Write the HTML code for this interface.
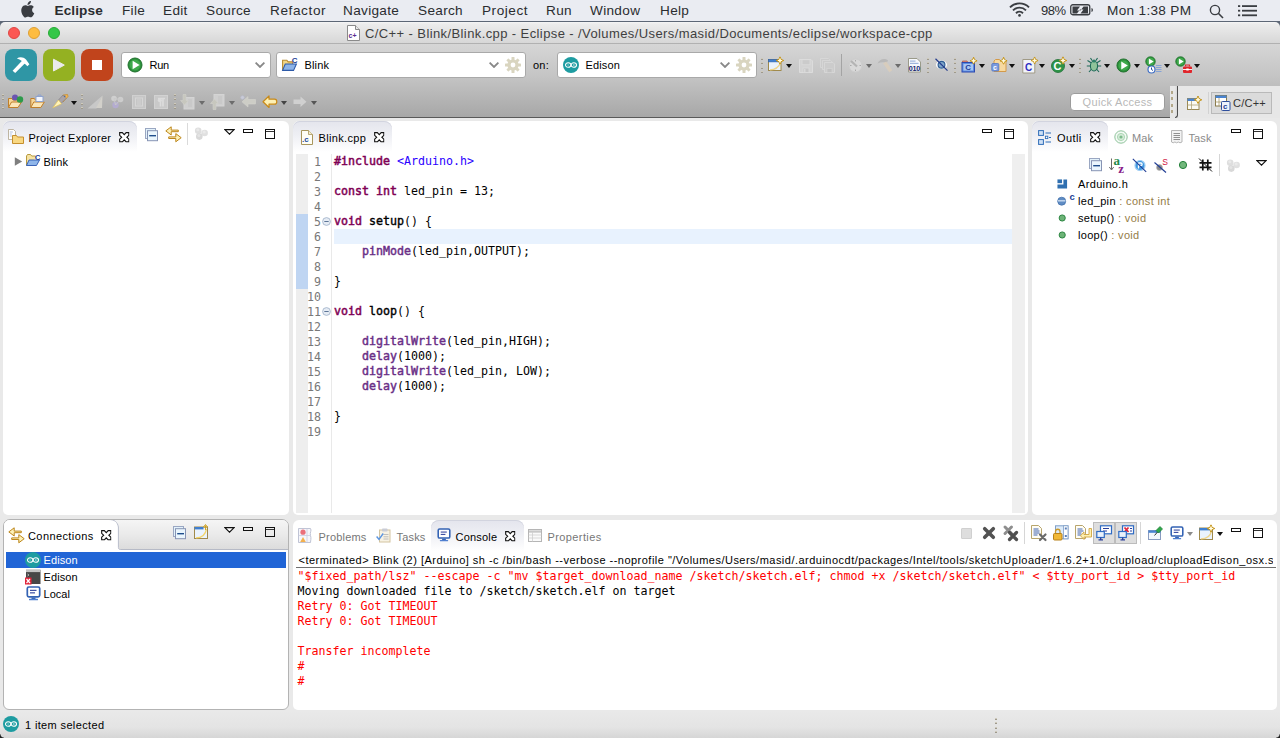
<!DOCTYPE html>
<html lang="en">
<head>
<meta charset="utf-8">
<title>C/C++ - Blink/Blink.cpp - Eclipse</title>
<style>
*{box-sizing:border-box;margin:0;padding:0}
html,body{width:1280px;height:738px;overflow:hidden;background:#e9e9e9;font-family:"Liberation Sans",sans-serif;font-size:12px;color:#000}
.abs{position:absolute}
svg{position:absolute;overflow:visible}
#menubar{position:absolute;left:0;top:0;width:1280px;height:22px;background:#eaecf2;border-bottom:1px solid #5d6776;font-size:14px;color:#2a2c30}
#menubar span{position:absolute;top:2px;line-height:17px;white-space:nowrap;letter-spacing:.32px;font-size:13.6px}
#titlebar{position:absolute;left:0;top:22px;width:1280px;height:22px;background:linear-gradient(#f6f6f6 0,#ececec 2px,#d7d7d7);border-bottom:1px solid #b1b1b1;border-radius:5px 5px 0 0}
#titlebar .t{position:absolute;left:365px;top:3.6px;font-size:13px;line-height:16px;color:#3f3f3f;white-space:nowrap;letter-spacing:.4px}
.tl{position:absolute;top:5px;width:12px;height:12px;border-radius:50%}
#toolbar{position:absolute;left:0;top:44px;width:1280px;height:74px;background:linear-gradient(#d6d6d6,#c4c4c4 45%,#a7a7a7);border-bottom:1px solid #595959}
#persp{position:absolute;left:1170px;top:86px;width:110px;height:32px;background:#e7e7e7}
.big{position:absolute;top:49px;width:32px;height:32px;border-radius:8px}
.combo{position:absolute;top:52px;height:26px;background:#fff;border:1px solid #a9a9a9;border-radius:3px;font-size:11px;letter-spacing:.15px;line-height:24px}
.combo .lbl{position:absolute;top:0;white-space:nowrap}
.tri{position:absolute;width:0;height:0;border-left:3px solid transparent;border-right:3px solid transparent;border-top:4.5px solid #111;margin-left:-.5px}
.tri.g{border-top-color:#6c6c6c}
.dots{position:absolute;width:2px;height:15px;background:repeating-linear-gradient(#cfcabb 0 1px,#9e998d 1px 2px,transparent 2px 4.3px)}
.panel{position:absolute;background:#fff;border-radius:6px 6px 5px 5px}
.tabtxt{position:absolute;font-size:11px;white-space:nowrap;line-height:16px;letter-spacing:.3px}
.ui{font-size:11px;white-space:nowrap;line-height:16px;letter-spacing:.25px;position:absolute}
.mono{font-family:"DejaVu Sans Mono","Liberation Mono",monospace;font-size:11.63px;white-space:pre;position:absolute;line-height:15px}
.kw{color:#7f0055;-webkit-text-stroke:.5px #7f0055}
.mono b{font-weight:normal;-webkit-text-stroke:.38px #000}
.fn{color:#6a2e86;-webkit-text-stroke:.45px #6a2e86}
.str{color:#2a00ff}
.red{color:#ff0000}
.minb{position:absolute;width:10px;height:4px;border:1px solid #111}
.maxb{position:absolute;width:10px;height:10px;border:1px solid #111;background:linear-gradient(#333,#333) 0 1px/8px 1px no-repeat}
.vsep{position:absolute;width:1px;background:#c8c8c8}
.deco{color:#957d47}
#status{position:absolute;left:0;top:711px;width:1280px;height:27px;background:linear-gradient(#e9e9e9,#e4e4e4 60%,#d6d6d6)}
</style>
</head>
<body>
<!-- MENUBAR -->
<div id="menubar">
<svg style="left:20px;top:.5px" width="15.500" height="17.500" viewBox="0 0 15 17"><path fill="#3a3d42" d="M10.6.1c.1 1-.3 1.900-.9 2.600-.6.700-1.500 1.200-2.400 1.100-.1-.9.400-1.900.9-2.500C8.800.6 9.800.1 10.600.1zM13.400 5.800c-.1.100-1.700 1-1.700 2.900 0 2.300 2 3.100 2.100 3.100 0 .1-.3 1.100-1.100 2.200-.6.900-1.300 1.900-2.400 1.900-1 0-1.300-.6-2.500-.6s-1.600.6-2.500.7c-1 0-1.800-1-2.500-2C1.500 12.100.5 8.600 1.900 6.200c.7-1.200 1.900-1.900 3.200-2 1-.0 1.900.7 2.500.7s1.700-.8 2.900-.7c.5 0 1.900.2 2.900 1.600z"/></svg>
<span style="left:54.500px;font-weight:bold;letter-spacing:.1px">Eclipse</span>
<span style="left:122px">File</span>
<span style="left:163px">Edit</span>
<span style="left:206px">Source</span>
<span style="left:270px;letter-spacing:.6px">Refactor</span>
<span style="left:343px">Navigate</span>
<span style="left:418px">Search</span>
<span style="left:482px;letter-spacing:.55px">Project</span>
<span style="left:546px">Run</span>
<span style="left:590px">Window</span>
<span style="left:660px">Help</span>
<!-- wifi -->
<svg style="left:1009px;top:2px" width="21" height="15" viewBox="0 0 21 15"><g fill="none" stroke="#3a3d42" stroke-width="1.900" stroke-linecap="butt"><path d="M1 5.300a13.500 13.500 0 0 1 19 0"/><path d="M4 8.300a9.200 9.200 0 0 1 13 0"/><path d="M7 11.200a5 5 0 0 1 7 0"/></g><circle cx="10.500" cy="13.400" r="1.300" fill="#3a3d42"/></svg>
<span style="left:1041px;font-size:13px;letter-spacing:-.5px">98%</span>
<!-- battery -->
<svg style="left:1070px;top:4px" width="24" height="12" viewBox="0 0 24 12"><rect x=".75" y=".75" width="19" height="10" rx="2" fill="none" stroke="#3a3d42" stroke-width="1.300"/><path d="M21.500 4v4c.9-.2 1.400-1 1.400-2s-.5-1.800-1.400-2z" fill="#3a3d42"/><path fill="#3a3d42" d="M2.500 2.500h7.500l-3 4h3.500l.4-.4v0L13.500 2.500h4.500v7h-7.500l3-4h-3.500L7 9.500h-4.500z"/></svg>
<span style="left:1107px">Mon 1:38 PM</span>
<!-- search -->
<svg style="left:1209px;top:4px" width="15" height="15" viewBox="0 0 15 15"><circle cx="6" cy="6" r="4.600" fill="none" stroke="#3a3d42" stroke-width="1.400"/><path d="M9.300 9.300L14 14" stroke="#3a3d42" stroke-width="1.600"/></svg>
<!-- list -->
<svg style="left:1238px;top:5px" width="19" height="12" viewBox="0 0 19 12"><g fill="#3a3d42"><rect x="0" y=".2" width="2.200" height="1.800"/><rect x="4" y=".2" width="15" height="1.800"/><rect x="0" y="4.800" width="2.200" height="1.800"/><rect x="4" y="4.800" width="15" height="1.800"/><rect x="0" y="9.400" width="2.200" height="1.800"/><rect x="4" y="9.400" width="15" height="1.800"/></g></svg>
</div>
<!-- TITLEBAR -->
<div class="abs" style="left:0;top:22px;width:1280px;height:6px;background:#5d6776"></div>
<div id="titlebar">
<div class="tl" style="left:8px;background:#fc5753;border:.5px solid #df4744"></div>
<div class="tl" style="left:28px;background:#fdbc40;border:.5px solid #de9f34"></div>
<div class="tl" style="left:48px;background:#33c748;border:.5px solid #27aa35"></div>
<!-- cpp file icon -->
<svg style="left:347px;top:3px" width="13" height="16" viewBox="0 0 13 16"><path d="M.5.500h8l4 4v11h-12z" fill="#fff" stroke="#8a8a8a"/><path d="M8.500.500v4h4" fill="#e8e8e8" stroke="#8a8a8a"/><text x="1.500" y="13" font-size="7" font-weight="bold" fill="#5a2d91" font-family="Liberation Sans, sans-serif">c+</text></svg>
<div class="t">C/C++ - Blink/Blink.cpp - Eclipse - /Volumes/Users/masid/Documents/eclipse/workspace-cpp</div>
</div>
<!-- SYMBOL DEFS -->
<svg width="0" height="0" style="left:-10px;top:-10px"><defs>
<symbol id="arduino" viewBox="0 0 16 16"><circle cx="8" cy="8" r="8" fill="#1e9ca1"/><g fill="none" stroke="#fff" stroke-width="1.050"><ellipse cx="5.200" cy="8" rx="2.700" ry="2.300"/><ellipse cx="10.800" cy="8" rx="2.700" ry="2.300"/></g><path d="M4.300 8h1.800M9.900 8h1.800M10.800 7.100v1.800" stroke="#bfe4e6" stroke-width=".6"/></symbol>
<symbol id="runico" viewBox="0 0 16 16"><circle cx="8" cy="8" r="7" fill="#2b8f3b" stroke="#1f6f2c" stroke-width="1"/><circle cx="8" cy="8" r="5.400" fill="#3fa94b"/><path d="M5.600 3.800v8.400l7-4.200z" fill="#fff"/></symbol>
<symbol id="cfolder" viewBox="0 0 16 16"><path d="M1.500 13.500v-9.500h4l1.200 1.500h4.300v2" fill="#f3d787" stroke="#b98a2c"/><path d="M1.500 13.500l2.500-6h10.500l-2.700 6z" fill="#8db4e8" stroke="#2d5aa8"/><text x="10.200" y="6.200" font-size="7.500" font-weight="bold" fill="#1c3f94" font-family="Liberation Sans, sans-serif">C</text></symbol>
<symbol id="gear" viewBox="0 0 16 16"><g fill="#d9d5c0"><circle cx="8" cy="8" r="5.600"/><g id="gt"><rect x="6.500" y="0" width="3" height="16" rx=".6"/><rect x="0" y="6.500" width="16" height="3" rx=".6"/></g><g transform="rotate(45 8 8)"><rect x="6.500" y="0" width="3" height="16" rx=".6"/><rect x="0" y="6.500" width="16" height="3" rx=".6"/></g></g><circle cx="8" cy="8" r="2.400" fill="#fff"/></symbol>
<symbol id="chev" viewBox="0 0 10 6"><path d="M.6.600L5 5l4.400-4.400" fill="none" stroke="#888" stroke-width="1.800"/></symbol>
<symbol id="xclose" viewBox="0 0 11 11"><path d="M.7.700h2.800L5.500 2.800 7.500.700h2.800v2.800L8.200 5.500l2.100 2v2.800H7.500L5.500 8.200l-2 2.100H.7V7.500L2.800 5.500.700 3.500z" fill="#fff" stroke="#111" stroke-width="1.150" stroke-linejoin="miter"/></symbol>
<symbol id="collapse" viewBox="0 0 14 14"><rect x=".5" y=".5" width="10" height="10" fill="#e3f2fb" stroke="#9aa7c2"/><rect x="2.500" y="2.700" width="10" height="10" fill="#eaf6fd" stroke="#8794b4"/><rect x="4.200" y="7" width="6.800" height="1.400" fill="#1f4e8c"/></symbol>
<symbol id="graydots" viewBox="0 0 14 13"><circle cx="4.200" cy="3.800" r="3.300" fill="#dedede"/><circle cx="10.600" cy="6" r="3.300" fill="#e0e0e0"/><circle cx="5.300" cy="9.600" r="3.300" fill="#d8d8d8"/><circle cx="3.800" cy="2.800" r="1.500" fill="#e9e9e9"/><circle cx="10.200" cy="5" r="1.500" fill="#eaeaea"/><circle cx="4.900" cy="8.600" r="1.500" fill="#e4e4e4"/></symbol>
<symbol id="menutri" viewBox="0 0 11 6"><path d="M.9.600h9.200L5.500 5.200z" fill="#fff" stroke="#111" stroke-width="1.100" stroke-linejoin="miter"/></symbol>
<symbol id="monitor" viewBox="0 0 15 15"><rect x="1.300" y="1" width="12.400" height="9.800" rx="1.500" fill="#fff" stroke="#3463b4" stroke-width="1.700"/><rect x="4" y="3.800" width="6.500" height="1.100" fill="#2c3f9a"/><rect x="4" y="6.300" width="5" height="1.100" fill="#2c3f9a"/><rect x="5.500" y="11.500" width="4" height="1.500" fill="#3463b4"/><rect x="3" y="12.800" width="9" height="1.400" rx=".5" fill="#4f7fd0"/></symbol>
</defs></svg>

<!-- TOOLBAR -->
<div id="toolbar"></div>
<div id="persp"></div>
<div class="big" style="left:5px;background:#2f96a5"><svg style="left:0;top:0" width="32" height="32" viewBox="0 0 32 32"><path fill="#fff" d="M11.900 9.500C14.500 7.700 18.500 8 21 10.400L24.400 15.200L22.400 17.300L20.400 15.300L19.500 14.800L10.200 24.100L7.600 21.700L16.800 12.100C15.400 10.700 13.600 10.100 11.900 9.500Z"/></svg></div>
<div class="big" style="left:43px;background:#94b122"><svg style="left:0;top:0" width="32" height="32" viewBox="0 0 32 32"><path fill="#ebebeb" stroke="#ebebeb" stroke-width="1" stroke-linejoin="round" d="M10.500 10.200V22L21.300 16.100Z"/></svg></div>
<div class="big" style="left:81px;background:#c1441c"><div class="abs" style="left:10.800px;top:11px;width:10.300px;height:10.200px;background:#fff"></div></div>

<div class="combo" style="left:121px;width:150px"><svg style="left:5px;top:4px" width="16" height="16"><use href="#runico"/></svg><span class="lbl" style="left:27.500px;letter-spacing:-.3px">Run</span><svg style="left:133px;top:9.300px" width="10" height="6"><use href="#chev"/></svg></div>
<div class="combo" style="left:276px;width:250px"><svg style="left:4px;top:3px" width="17" height="17"><use href="#cfolder"/></svg><span class="lbl" style="left:27.500px">Blink</span><svg style="left:212px;top:9.300px" width="10" height="6"><use href="#chev"/></svg><svg style="left:228px;top:4px" width="16" height="16"><use href="#gear"/></svg></div>
<div class="ui" style="left:533px;top:57px;font-size:11px">on:</div>
<div class="combo" style="left:557px;width:200px"><svg style="left:5px;top:4px" width="16" height="16"><use href="#arduino"/></svg><span class="lbl" style="left:27.500px">Edison</span><svg style="left:162px;top:9.300px" width="10" height="6"><use href="#chev"/></svg><svg style="left:178px;top:4px" width="16" height="16"><use href="#gear"/></svg></div>
<!-- toolbar row1 icons -->
<svg width="0" height="0" style="left:-10px;top:-10px"><defs>
<symbol id="plus" viewBox="0 0 8 8"><path d="M4 .2L5.100 2.900l2.700 1.100L5.100 5.100 4 7.800 2.900 5.100.2 4 2.900 2.900z" fill="#fbe89a" stroke="#c4931a" stroke-width="1"/><path d="M4 2v4M2 4h4" stroke="#fffbe8" stroke-width="1.100"/></symbol>
<symbol id="savegray" viewBox="0 0 14 14"><path d="M.5.500h11.500l1.500 1.500v11.500h-13z" fill="#d3d3d3" stroke="#dcdcdc"/><rect x="3" y=".8" width="8" height="5" fill="#cbcbcb" stroke="#dedede" stroke-width=".7"/><rect x="4" y="9" width="6" height="4.500" fill="#c6c6c6" stroke="#dedede" stroke-width=".7"/><rect x="5" y="10" width="1.500" height="3" fill="#d8d8d8"/></symbol>
</defs></svg>
<div class="dots" style="left:761px;top:58px"></div>
<svg style="left:768px;top:57px" width="16" height="16" viewBox="0 0 16 16"><rect x=".5" y="2.500" width="12.500" height="11" fill="#eaf3fd" stroke="#a08a4c"/><rect x=".5" y="2.500" width="12.500" height="2.400" fill="#3f7fd0" stroke="#2d62ad" stroke-width=".6"/><path d="M2 12.800c5 0 9-3 10.500-7" fill="none" stroke="#efd58a" stroke-width="1.300"/><use href="#plus" x="8" y="-.5" width="8" height="8"/></svg>
<div class="tri" style="left:786px;top:64px"></div>
<svg style="left:799px;top:59px" width="14" height="14"><use href="#savegray"/></svg>
<svg style="left:820px;top:58px" width="15" height="15" viewBox="0 0 15 15"><g opacity=".9"><path d="M.5.500h8l1 1v8h-9z" fill="#cbcbcb" stroke="#d8d8d8"/><path d="M2.500 2.500h8l1 1v8h-9z" fill="#cbcbcb" stroke="#d8d8d8"/><path d="M4.500 4.500h8.500l1.500 1.500v8.500h-10z" fill="#cdcdcd" stroke="#d9d9d9"/><rect x="7" y="10.500" width="5" height="4" fill="#c2c2c2" stroke="#d9d9d9" stroke-width=".6"/></g></svg>
<div class="vsep" style="left:841px;top:54px;height:22px;background:#a4a4a4"></div>
<svg style="left:848px;top:58px" width="15" height="15" viewBox="0 0 15 15"><circle cx="7.500" cy="7.500" r="6.500" fill="#d9d9d9" stroke="#cdcdcd"/><path d="M7.500 2v1.500M7.500 11.500V13M2 7.500h1.500M11.500 7.500H13" stroke="#aaa"/><path d="M3 3l6 5.500" stroke="#b4b4b4" stroke-width="2.200"/></svg>
<div class="tri g" style="left:866px;top:64px"></div>
<svg style="left:877px;top:57px" width="16" height="16" viewBox="0 0 16 16"><path d="M.5 6.500C2.500 2 7.500.800 11 3.500L9.500 6.300C7 4.800 4 5.300.5 6.500z" fill="#b9b9b9"/><path d="M6 6.300l3.300-1.800 6 8.800-3 2z" fill="#d8cdbd"/></svg>
<div class="tri g" style="left:895px;top:64px"></div>
<svg style="left:908px;top:58px" width="14" height="15" viewBox="0 0 14 15"><path d="M.5.500h8.500l3.500 3.500v10h-12z" fill="#f6f8fc" stroke="#9a9a8a"/><rect x="2" y="2.500" width="5.500" height="1.200" fill="#9fb6dd"/><rect x="2" y="4.800" width="8.500" height="1.200" fill="#9fb6dd"/><text x=".8" y="12.600" font-size="7.200" font-weight="bold" fill="#15266e" font-family="Liberation Sans, sans-serif" letter-spacing="-.3">010</text></svg>
<div class="dots" style="left:927px;top:58px"></div>
<svg style="left:934px;top:58px" width="15" height="14" viewBox="0 0 15 14"><ellipse cx="7.500" cy="6.800" rx="5.500" ry="4.300" fill="#fff"/><circle cx="7.500" cy="6.800" r="3.400" fill="#7fa6c9" stroke="#2e5d94" stroke-width="1.200"/><path d="M1.500.8l12 11.800" stroke="#223a8c" stroke-width="1.200"/></svg>
<div class="dots" style="left:954px;top:58px"></div>
<svg style="left:960.800px;top:56.800px" width="17" height="17" viewBox="0 0 17 17"><path d="M1.500 6v-2h4.500l1 1.500" fill="#d98a7a" stroke="#b45d4e" stroke-width=".8"/><rect x="1" y="5.500" width="12.500" height="9.500" fill="#5d8ee0" stroke="#2c48b0"/><rect x="2.500" y="7" width="9.500" height="6.500" fill="#a9c6f2"/><text x="4.200" y="13.300" font-size="8" font-weight="bold" fill="#1d3f9a" font-family="Liberation Sans, sans-serif">C</text><use href="#plus" x="8.800" y="0" width="7.600" height="7.600"/></svg>
<div class="tri" style="left:979px;top:64px"></div>
<svg style="left:990.500px;top:56.600px" width="17" height="17" viewBox="0 0 17 17"><path d="M3 14.500v-10.500l1.500-1.500h4l1.500 2h5v10z" fill="#f7d9a0" stroke="#d39a4a"/><rect x=".8" y="6.500" width="7" height="7.500" rx="1" fill="#7a9be0" stroke="#5273c2" stroke-width=".8"/><text x="2" y="12.800" font-size="7" font-weight="bold" fill="#fff" font-family="Liberation Sans, sans-serif">c</text><use href="#plus" x="8.800" y="0" width="7.600" height="7.600"/></svg>
<div class="tri" style="left:1009.500px;top:64px"></div>
<svg style="left:1021.800px;top:56.500px" width="17" height="17" viewBox="0 0 17 17"><path d="M.8 2.500h10l2 2v11.500h-12z" fill="#f2f4fa" stroke="#a09a86"/><text x="3" y="13.500" font-size="10" font-weight="bold" fill="#2f2fc0" font-family="Liberation Sans, sans-serif">C</text><use href="#plus" x="8.800" y="-.3" width="7.600" height="7.600"/></svg>
<div class="tri" style="left:1039.500px;top:64px"></div>
<svg style="left:1051px;top:57px" width="16" height="16" viewBox="0 0 16 16"><circle cx="7" cy="9" r="6.500" fill="#2d9348" stroke="#1f7034" stroke-width=".8"/><text x="2.600" y="13.200" font-size="11" font-weight="bold" fill="#fff" font-family="Liberation Sans, sans-serif">C</text><use href="#plus" x="8" y="-.5" width="8" height="8"/></svg>
<div class="tri" style="left:1069.500px;top:64px"></div>
<div class="dots" style="left:1079px;top:58px"></div>
<!-- bug -->
<svg style="left:1086px;top:57px" width="16" height="16" viewBox="0 0 16 16"><g stroke="#1f6a58" stroke-width="1.100" fill="none"><path d="M5.500 6L1.500 3.500M10.500 6l4-2.500M4.500 9H.8M11.500 9h3.700M5.500 12L3 15M10.500 12l2.500 3M6 3.500L4.500 1M10 3.500l1.500-2.500"/></g><ellipse cx="8" cy="9" rx="3.600" ry="5" fill="#8fc39a" stroke="#1f6a58" stroke-width="1.100"/><ellipse cx="8" cy="4" rx="2" ry="1.500" fill="#2f8069"/></svg>
<div class="tri" style="left:1104.500px;top:64px"></div>
<svg style="left:1116px;top:58px" width="15" height="15"><use href="#runico"/></svg>
<div class="tri" style="left:1134px;top:64px"></div>
<svg style="left:1145px;top:56px" width="17" height="18" viewBox="0 0 17 18"><use href="#runico" x="0" y="0" width="11" height="11"/><circle cx="6.500" cy="13.500" r="3.500" fill="#fff" stroke="#3f6fc6" stroke-width="1.200"/><path d="M6.500 11.500v2l1.500 1" stroke="#234a9c" stroke-width="1" fill="none"/><path d="M11 9.500h5.500M11 11.500h5.500M11 13.500h5.500M11 15.500h5.500" stroke="#7f9fd8" stroke-width=".9"/></svg>
<div class="tri" style="left:1164px;top:64px"></div>
<svg style="left:1175px;top:56px" width="18" height="18" viewBox="0 0 18 18"><use href="#runico" x="0" y="0" width="11" height="11"/><rect x="8" y="10.500" width="9" height="6.500" rx="1" fill="#e0262c"/><path d="M10.500 10.500v-1.500h4v1.500" fill="none" stroke="#e0262c" stroke-width="1.200"/><path d="M8 13.500h9" stroke="#fff" stroke-width=".9"/><rect x="11.300" y="12.500" width="2.400" height="2" fill="#fff"/></svg>
<div class="tri" style="left:1194px;top:64px"></div>
<!-- toolbar row2 -->
<div class="dots" style="left:2px;top:94px"></div>
<svg style="left:7px;top:93px" width="18" height="17" viewBox="0 0 18 17"><path d="M1.500 14.500v-9h3.500l1 1.500h5v2" fill="#f6d79a" stroke="#c07f2a"/><path d="M1.500 14.500l3-5.500h10l-3.500 5.500z" fill="#fbe6b8" stroke="#c07f2a"/><circle cx="8" cy="4.500" r="3" fill="#6a55b0"/><circle cx="13" cy="6.500" r="3.200" fill="#2c9a4b"/></svg>
<svg style="left:30px;top:93px" width="17" height="17" viewBox="0 0 17 17"><path d="M.8 14.500v-9h3.500l1 1.500h5v2" fill="#f6d79a" stroke="#c07f2a"/><path d="M.8 14.500l3-5.500h10.500l-3.500 5.500z" fill="#fbe6b8" stroke="#c07f2a"/><rect x="6" y="3.500" width="7" height="5" fill="#f3f6fc" stroke="#8ea3cf"/><path d="M8 3.500v-1.500h3v1.500" fill="none" stroke="#8ea3cf"/></svg>
<svg style="left:52px;top:94px" width="17" height="15" viewBox="0 0 17 15"><path d="M11 1l4.500-.5.500 2L11 8z" fill="#f3b64f" stroke="#c58a2a" stroke-width=".7"/><path d="M6.500 6l4.500-5 3 3.500-5 5z" fill="#a9a3a8" stroke="#7e7a80" stroke-width=".6"/><path d="M.8 13.800l5.700-7.800 3 3.800z" fill="#fff3b8" stroke="#e7c55a" stroke-width=".7"/><circle cx="12.800" cy="2.300" r=".8" fill="#2f5fc0"/></svg>
<div class="tri" style="left:71px;top:101px"></div>
<div class="dots" style="left:81px;top:94px"></div>
<svg style="left:87px;top:95px" width="16" height="14" viewBox="0 0 16 14"><path d="M.5 13.500h9l6-13z" fill="#c8c8c8"/><path d="M9 13L15.500.500 15 13" fill="#d2d0ca"/></svg>
<svg style="left:110px;top:95px" width="14" height="14" viewBox="0 0 14 14"><circle cx="4" cy="3.500" r="2.800" fill="#cfcfcf"/><circle cx="10.500" cy="4.500" r="2.800" fill="#cdcdcd"/><circle cx="5.500" cy="10" r="3.200" fill="#b4acd0"/><path d="M4 3.500l6.500 1-5 5.500z" fill="none" stroke="#c9c9c9"/></svg>
<svg style="left:132px;top:95px" width="14" height="14" viewBox="0 0 14 14"><rect x=".5" y=".5" width="13" height="13" fill="#c6c6c6" stroke="#d0d0d0"/><rect x="3.500" y="3" width="7" height="8" fill="none" stroke="#d6d6d6"/><path d="M5 5h4M5 7h4M5 9h4" stroke="#d6d6d6" stroke-width=".8"/></svg>
<svg style="left:154px;top:95px" width="14" height="14" viewBox="0 0 14 14"><rect x=".5" y=".5" width="13" height="13" fill="#c9c9c9" stroke="#d2d2d2"/><path d="M4 3.500h7M6.500 3.500v8M9 3.500v8" stroke="#dcdcdc" stroke-width="1.600" fill="none"/><circle cx="5.800" cy="5.300" r="2" fill="#dcdcdc"/></svg>
<div class="dots" style="left:174px;top:94px"></div>
<svg style="left:180px;top:94px" width="15" height="16" viewBox="0 0 15 16"><rect x="4" y="3.500" width="10" height="11.500" fill="#cfcfcf" stroke="#d4d4d4"/><path d="M8 6h4M8 8h4M8 10h4M8 12h4" stroke="#bdbdbd" stroke-width=".7"/><path d="M3 .5h3v6h2.500L4.500 11 .5 6.500H3z" fill="#c7c7be" stroke="#d2d2cc" stroke-width=".6"/></svg>
<div class="tri g" style="left:199px;top:101px"></div>
<svg style="left:210px;top:94px" width="15" height="16" viewBox="0 0 15 16"><rect x="4" y=".5" width="10" height="11.500" fill="#cfcfcf" stroke="#d4d4d4"/><path d="M8 3h4M8 5h4M8 7h4M8 9h4" stroke="#bdbdbd" stroke-width=".7"/><path d="M3 15.500h3v-6h2.500L4.500 5 .5 9.500H3z" fill="#c7c7be" stroke="#d2d2cc" stroke-width=".6"/></svg>
<div class="tri g" style="left:229px;top:101px"></div>
<svg style="left:240px;top:95px" width="16" height="13" viewBox="0 0 16 13"><path d="M8 1.500v3h7.500v4.500H8v3L2 6.800z" fill="#cdcdc6" stroke="#d4d4cf" stroke-width=".6"/><circle cx="2.500" cy="2.500" r="1.800" fill="#c9cbd6" stroke="#b8bcd0" stroke-width=".6"/></svg>
<svg style="left:262px;top:95px" width="16" height="14" viewBox="0 0 16 14"><path d="M7 1v3.200h5.500c1.600 0 2.300.9 2.300 2.500s-.7 2.500-2.300 2.500H7v3.300L1 6.800z" fill="#fdf0b4" stroke="#c98a18" stroke-width="1.200" stroke-linejoin="round"/></svg>
<div class="tri" style="left:281px;top:101px;border-top-color:#444"></div>
<svg style="left:293px;top:96px" width="14" height="12" viewBox="0 0 14 12"><path d="M7.500.5v3H.5v4.500h7v3L13.500 5.800z" fill="#d0d0d0"/></svg>
<div class="tri g" style="left:311px;top:101px;border-top-color:#555"></div>

<!-- perspective bar -->
<div class="abs" style="left:1171px;top:91px;width:2px;height:23px;background:repeating-linear-gradient(#b3a88a 0 3px,transparent 3px 6.400px)"></div>
<div class="abs" style="left:1174.500px;top:86px;width:3.500px;height:31.500px;border-right:1.500px solid #4e4e4e;border-bottom:1.500px solid #4e4e4e;border-bottom-right-radius:3px;background:linear-gradient(90deg,#e7e7e7,#d6d6d6)"></div>
<div class="abs" style="left:1070px;top:92.500px;width:95px;height:18px;background:#fff;border:1px solid #9c9c9c;border-radius:4px;color:#b8b8b8;font-size:11px;line-height:16px;text-align:center;letter-spacing:.32px">Quick Access</div>
<svg style="left:1186.500px;top:95px" width="16" height="15" viewBox="0 0 16 15"><rect x=".5" y="3.500" width="11.500" height="11" fill="#fbfbf4" stroke="#9a8a56"/><rect x=".5" y="3.500" width="11.500" height="2.500" fill="#4a84d0"/><path d="M4.500 6v8.500M.5 10h11.500" stroke="#b3a67a" stroke-width=".8"/><use href="#plus" x="7" y=".8" width="8" height="8"/></svg>
<div class="vsep" style="left:1208px;top:92px;height:22px;background:#d2d2d2"></div>
<div class="abs" style="left:1211px;top:92px;width:61px;height:22px;background:#dbdbdb;border:1px solid #b9b9b9"></div>
<svg style="left:1215px;top:95px" width="17" height="16" viewBox="0 0 17 16"><rect x=".5" y=".5" width="11" height="10.500" fill="#fff" stroke="#8a7a4a"/><rect x=".5" y=".5" width="11" height="2.500" fill="#4a84d0"/><path d="M4 3v8M.5 7h11" stroke="#a89a6a" stroke-width=".8"/><rect x="6.500" y="6.500" width="8.500" height="9" rx="1" fill="#eef3fb" stroke="#2f4f9c"/><text x="8" y="14" font-size="8" font-weight="bold" fill="#1f3f95" font-family="Liberation Sans, sans-serif">c</text></svg>
<div class="ui" style="left:1233px;top:95px;color:#333;letter-spacing:.23px">C/C++</div>
<!-- PROJECT EXPLORER -->
<div class="panel" style="left:3px;top:121px;width:286px;height:394px"></div>
<div class="abs" style="left:3px;top:121px;width:134px;height:31px;background:linear-gradient(#e4e5ed,#eeeff4 45%,#fff);box-shadow:inset 0 1px 0 #d2d4df;border-radius:7px 8px 0 0"></div>
<svg style="left:8px;top:129px" width="17" height="15" viewBox="0 0 17 15"><path d="M.5.500h5l2 2v8h-7z" fill="#fdfdfd" stroke="#b0a58a" stroke-width=".8"/><path d="M1.800 3h3M1.800 5h2M1.800 7h2" stroke="#9fb4d8" stroke-width=".8"/><path d="M4.500 14.500v-8h4l1 1.500h6v6.500z" fill="#f8d883" stroke="#c58f2e"/></svg>
<div class="tabtxt" style="left:28.500px;top:130px;letter-spacing:.28px">Project Explorer</div>
<svg style="left:118.800px;top:131.700px" width="10.500" height="10.500"><use href="#xclose"/></svg>
<svg style="left:144.700px;top:127.500px" width="14" height="14"><use href="#collapse"/></svg>
<svg style="left:164.500px;top:125.500px" width="17" height="17" viewBox="0 0 17 17"><path d="M6.200.800v3.300h7.100v1.600H6.200v3.300L.800 4.900z" fill="#fdf1b8" stroke="#bd861a" stroke-width="1" stroke-linejoin="round"/><path d="M10.800 7.600v3.300H3.700v1.600h7.100v3.300l5.400-4.100z" fill="#fdf1b8" stroke="#bd861a" stroke-width="1" stroke-linejoin="round"/></svg>
<div class="vsep" style="left:187px;top:123px;height:22px;background:#dadada"></div>
<svg style="left:194px;top:127.200px" width="14" height="13"><use href="#graydots"/></svg>
<svg style="left:223.500px;top:129px" width="11" height="6"><use href="#menutri"/></svg>
<div class="minb" style="left:243px;top:129px"></div>
<div class="maxb" style="left:265px;top:129px"></div>
<!-- tree -->
<svg style="left:14px;top:157px" width="9" height="9" viewBox="0 0 9 9"><path d="M.8.300v8.400l7.400-4.200z" fill="#7f7f7f"/></svg>
<svg style="left:25px;top:153px" width="16" height="14" viewBox="0 0 16 14"><path d="M1.500 12.500v-9.500l1-1.500h3l1.200 1.500h3.800v2.500" fill="#f6e3a3" stroke="#b0902e" stroke-width=".9"/><path d="M1.500 12.500l2.500-5.500h10.500l-3 5.500z" fill="#8fb6ea" stroke="#2b57b0" stroke-width=".9"/><text x="10" y="6.500" font-size="7.500" font-weight="bold" fill="#1c3f94" font-family="Liberation Sans, sans-serif">C</text></svg>
<div class="ui" style="left:43.500px;top:154px;letter-spacing:.16px">Blink</div>
<!-- EDITOR -->
<div class="panel" style="left:293px;top:121px;width:735px;height:394px"></div>
<div class="abs" style="left:293px;top:121px;width:99px;height:31px;background:linear-gradient(#e4e5ed,#eeeff4 45%,#fff);box-shadow:inset 0 1px 0 #d2d4df;border-radius:7px 8px 0 0"></div>
<svg style="left:301px;top:130px" width="12" height="15" viewBox="0 0 12 15"><path d="M.5.500h7l4 4v10h-11z" fill="#fffef6" stroke="#a8965c"/><path d="M7.500.500v4h4" fill="#f3ecd0" stroke="#a8965c" stroke-width=".8"/><text x="1" y="12" font-size="8" font-weight="bold" fill="#234a9c" font-family="Liberation Sans, sans-serif">.c</text></svg>
<div class="tabtxt" style="left:318.500px;top:130px;letter-spacing:.34px">Blink.cpp</div>
<svg style="left:373.800px;top:131.700px" width="10.500" height="10.500"><use href="#xclose"/></svg>
<div class="minb" style="left:982px;top:129px"></div>
<div class="maxb" style="left:1004px;top:129px"></div>
<div class="abs" style="left:296px;top:154px;width:12px;height:359px;background:#eeeeee"></div>
<div class="abs" style="left:296px;top:214px;width:12px;height:75px;background:#bfd5f2"></div>
<div class="abs" style="left:331px;top:154px;width:1px;height:359px;background:#e9e9e9"></div>
<div class="abs" style="left:334px;top:229px;width:678px;height:15px;background:#e8f2fe"></div>
<div class="abs" style="left:1012px;top:154px;width:13px;height:359px;background:#efefef"></div>
<div class="mono" style="left:300px;width:21px;top:154.6px;text-align:right;color:#787878">1</div>
<div class="mono" style="left:334px;top:154px"><span class="kw">#include</span> <span class="str">&lt;Arduino.h&gt;</span></div>
<div class="mono" style="left:300px;width:21px;top:169.6px;text-align:right;color:#787878">2</div>
<div class="mono" style="left:300px;width:21px;top:184.6px;text-align:right;color:#787878">3</div>
<div class="mono" style="left:334px;top:184px"><span class="kw">const</span> <span class="kw">int</span> led_pin = 13;</div>
<div class="mono" style="left:300px;width:21px;top:199.6px;text-align:right;color:#787878">4</div>
<div class="mono" style="left:300px;width:21px;top:214.6px;text-align:right;color:#787878">5</div>
<div class="mono" style="left:334px;top:214px"><span class="kw">void</span> <b>setup</b>() {</div>
<div class="mono" style="left:300px;width:21px;top:229.6px;text-align:right;color:#787878">6</div>
<div class="mono" style="left:300px;width:21px;top:244.6px;text-align:right;color:#787878">7</div>
<div class="mono" style="left:334px;top:244px">    <span class="fn">pinMode</span>(led_pin,OUTPUT);</div>
<div class="mono" style="left:300px;width:21px;top:259.6px;text-align:right;color:#787878">8</div>
<div class="mono" style="left:300px;width:21px;top:274.6px;text-align:right;color:#787878">9</div>
<div class="mono" style="left:334px;top:274px">}</div>
<div class="mono" style="left:300px;width:21px;top:289.6px;text-align:right;color:#787878">10</div>
<div class="mono" style="left:300px;width:21px;top:304.6px;text-align:right;color:#787878">11</div>
<div class="mono" style="left:334px;top:304px"><span class="kw">void</span> <b>loop</b>() {</div>
<div class="mono" style="left:300px;width:21px;top:319.6px;text-align:right;color:#787878">12</div>
<div class="mono" style="left:300px;width:21px;top:334.6px;text-align:right;color:#787878">13</div>
<div class="mono" style="left:334px;top:334px">    <span class="fn">digitalWrite</span>(led_pin,HIGH);</div>
<div class="mono" style="left:300px;width:21px;top:349.6px;text-align:right;color:#787878">14</div>
<div class="mono" style="left:334px;top:349px">    <span class="fn">delay</span>(1000);</div>
<div class="mono" style="left:300px;width:21px;top:364.6px;text-align:right;color:#787878">15</div>
<div class="mono" style="left:334px;top:364px">    <span class="fn">digitalWrite</span>(led_pin, LOW);</div>
<div class="mono" style="left:300px;width:21px;top:379.6px;text-align:right;color:#787878">16</div>
<div class="mono" style="left:334px;top:379px">    <span class="fn">delay</span>(1000);</div>
<div class="mono" style="left:300px;width:21px;top:394.6px;text-align:right;color:#787878">17</div>
<div class="mono" style="left:300px;width:21px;top:409.6px;text-align:right;color:#787878">18</div>
<div class="mono" style="left:334px;top:409px">}</div>
<div class="mono" style="left:300px;width:21px;top:424.6px;text-align:right;color:#787878">19</div>
<svg style="left:322px;top:217px" width="9" height="9" viewBox="0 0 9 9"><circle cx="4.500" cy="4.500" r="3.900" fill="#e6ecf4" stroke="#9cafc6" stroke-width=".8"/><path d="M2.300 4.500h4.400" stroke="#5c7596" stroke-width="1"/></svg>
<svg style="left:322px;top:307px" width="9" height="9" viewBox="0 0 9 9"><circle cx="4.500" cy="4.500" r="3.900" fill="#e6ecf4" stroke="#9cafc6" stroke-width=".8"/><path d="M2.300 4.500h4.400" stroke="#5c7596" stroke-width="1"/></svg>
<!-- OUTLINE -->
<div class="panel" style="left:1032px;top:121px;width:245px;height:394px"></div>
<div class="abs" style="left:1032px;top:121px;width:76px;height:31px;background:linear-gradient(#e4e5ed,#eeeff4 45%,#fff);box-shadow:inset 0 1px 0 #d2d4df;border-radius:7px 8px 0 0"></div>
<svg style="left:1038px;top:130px" width="13" height="15" viewBox="0 0 13 15"><rect x=".6" y=".6" width="4.800" height="4.800" fill="#cfe0f5" stroke="#2f6db8" stroke-width="1"/><rect x=".6" y="9.600" width="4.800" height="4.800" fill="#cfe0f5" stroke="#2f6db8" stroke-width="1"/><path d="M7.500 3h5.500M7.500 12h5.500M11 7.500h2" stroke="#2f6db8" stroke-width="1"/><rect x="7.400" y="6.200" width="2.400" height="2.400" fill="#fff" stroke="#2f6db8" stroke-width=".9"/></svg>
<div class="tabtxt" style="left:1057px;top:130px;letter-spacing:.39px">Outli</div>
<svg style="left:1090.200px;top:131.700px" width="10.500" height="10.500"><use href="#xclose"/></svg>
<svg style="left:1114px;top:130px" width="14" height="14" viewBox="0 0 14 14"><circle cx="7" cy="7" r="6.200" fill="#f4faf5" stroke="#8fc49c" stroke-width="1"/><circle cx="7" cy="7" r="3.600" fill="#d5ecd9" stroke="#9fcfaa" stroke-width=".8"/><circle cx="7" cy="7" r="1.600" fill="#7dbb8b"/></svg>
<div class="tabtxt" style="left:1132px;top:130px;color:#8a8a8a;letter-spacing:.11px">Mak</div>
<svg style="left:1171px;top:130px" width="12" height="15" viewBox="0 0 12 15"><path d="M.5.500h10.500v11.500l-2 .8-1.700-.8-1.700.8-1.700-.8-1.700.8-1.700-.8z" fill="#f3f3f3" stroke="#b5b5b5"/><path d="M2.500 3.500h6.500M2.500 5.500h6.500M2.500 7.500h6.500M2.500 9.500h6.500" stroke="#8f8f8f" stroke-width="1"/></svg>
<div class="tabtxt" style="left:1188.500px;top:130px;color:#8a8a8a;letter-spacing:.12px">Task</div>
<div class="minb" style="left:1231px;top:129px"></div>
<div class="maxb" style="left:1253px;top:129px"></div>
<!-- outline toolbar -->
<svg style="left:1088.700px;top:158.200px" width="14" height="14"><use href="#collapse"/></svg>
<svg style="left:1109px;top:157px" width="17" height="16" viewBox="0 0 17 16"><path d="M2.500 1.500v11M.3 10l2.200 3 2.200-3" fill="none" stroke="#6a6a6a" stroke-width="1"/><text x="4.500" y="8" font-size="13" font-weight="bold" fill="#23884a" font-family="Liberation Serif, serif">a</text><text x="9.200" y="15.600" font-size="13" font-weight="bold" fill="#8a1f8a" font-family="Liberation Serif, serif">z</text></svg>
<svg style="left:1132px;top:158px" width="15" height="15" viewBox="0 0 15 15"><circle cx="8" cy="7.500" r="5" fill="#3f98e0" stroke="#9fcdf3" stroke-width="1.200"/><path d="M6.500 5h2.500c1.500 0 1.500 2.500 0 2.500h-2.500M6.500 4.500v6" stroke="#fff" stroke-width="1.300" fill="none"/><path d="M.8.800l13.400 13" stroke="#1f3c94" stroke-width="1.100"/></svg>
<svg style="left:1154px;top:157px" width="15" height="16" viewBox="0 0 15 16"><circle cx="5.500" cy="10.500" r="3" fill="#8a8a8a" stroke="#b8b8b8" stroke-width=".6"/><path d="M.5 5.500l11.500 10" stroke="#1f3c94" stroke-width="1.100"/><text x="8.200" y="7.600" font-size="8.500" fill="#d0103a" font-family="Liberation Sans, sans-serif">S</text></svg>
<svg style="left:1178px;top:160px" width="10" height="10" viewBox="0 0 10 10"><circle cx="5" cy="5" r="3.600" fill="#72b77c" stroke="#23803a" stroke-width="1"/></svg>
<svg style="left:1198px;top:158px" width="15" height="14" viewBox="0 0 15 14"><path d="M4.800 1.500v11M9.800 1.500v11M1.500 4.800h12M1.500 9.300h12" stroke="#111" stroke-width="1.700"/><path d="M1 .500l13 13" stroke="#111" stroke-width="1"/></svg>
<div class="vsep" style="left:1219px;top:154px;height:22px;background:#d6d6d6"></div>
<svg style="left:1226px;top:158.500px" width="14" height="13"><use href="#graydots"/></svg>
<svg style="left:1255.500px;top:160px" width="11" height="6"><use href="#menutri"/></svg>
<!-- outline tree -->
<svg style="left:1057px;top:179px" width="11" height="10" viewBox="0 0 12 12" preserveAspectRatio="none"><rect x=".5" y=".5" width="5" height="4.500" fill="#2f6fb0"/><path d="M.5 6.500h6.500v-6h4v11h-10.500z" fill="#2f6fb0"/></svg>
<div class="ui" style="left:1078px;top:176px;letter-spacing:.34px">Arduino.h</div>
<svg style="left:1057px;top:193px" width="20" height="14" viewBox="0 0 20 14"><circle cx="4.700" cy="8.200" r="4" fill="#5f8cc4" stroke="#4472ac" stroke-width=".8"/><path d="M1 7.800h7.400" stroke="#c9dbf0" stroke-width="1.400"/><text x="12.600" y="6.800" font-size="9.500" font-weight="bold" fill="#1c3f94" font-family="Liberation Sans, sans-serif">c</text></svg>
<div class="ui" style="left:1078px;top:193px;letter-spacing:.34px">led_pin<span class="deco"> : const int</span></div>
<svg style="left:1057px;top:213px" width="10" height="10" viewBox="0 0 10 10"><circle cx="5.200" cy="5" r="3.100" fill="#6db377" stroke="#23803a" stroke-width=".9"/></svg>
<div class="ui" style="left:1078px;top:210px;letter-spacing:.34px">setup()<span class="deco"> : void</span></div>
<svg style="left:1057px;top:230px" width="10" height="10" viewBox="0 0 10 10"><circle cx="5.200" cy="5" r="3.100" fill="#6db377" stroke="#23803a" stroke-width=".9"/></svg>
<div class="ui" style="left:1078px;top:227px;letter-spacing:.31px">loop()<span class="deco"> : void</span></div>
<!-- CONNECTIONS (active) -->
<div class="abs" style="left:3px;top:519px;width:286px;height:191px;background:#fff;border:1px solid #b3b3b3;border-radius:7px 7px 6px 6px;overflow:hidden">
<div class="abs" style="left:0;top:0;width:284px;height:30px;background:linear-gradient(#f5f5f5,#eaeaea 50%,#dcdcdc);border-bottom:1px solid #b6bac6"></div>
<svg style="left:-1px;top:-1px" width="124" height="31" viewBox="0 0 124 31"><path d="M0 31V0h106c5.500 0 8.500 2.500 9.400 8V28.500c0 1.300.7 2 2 2V31z" fill="#fff"/><path d="M106 .5c5.500 0 8.500 2.500 9.400 7.500V28.500c0 1.300.7 2 2 2" fill="none" stroke="#b9bdcb" stroke-width="1"/></svg>
</div>
<svg style="left:7.500px;top:526.500px" width="17" height="17" viewBox="0 0 17 17"><path d="M6.200.800v3.300h7.100v1.600H6.200v3.300L.800 4.900z" fill="#fdf1b8" stroke="#bd861a" stroke-width="1" stroke-linejoin="round"/><path d="M10.800 7.600v3.300H3.700v1.600h7.100v3.300l5.400-4.100z" fill="#fdf1b8" stroke="#bd861a" stroke-width="1" stroke-linejoin="round"/></svg>
<div class="tabtxt" style="left:28px;top:528px;letter-spacing:.41px">Connections</div>
<svg style="left:100.700px;top:530px" width="10.500" height="10.500"><use href="#xclose"/></svg>
<svg style="left:172.800px;top:525.800px" width="14" height="14"><use href="#collapse"/></svg>
<svg style="left:194px;top:524px" width="16" height="16" viewBox="0 0 16 16"><rect x=".5" y="3" width="13" height="11.500" fill="#eaf3fd" stroke="#a08a4c"/><rect x=".5" y="3" width="9" height="2.400" fill="#3f7fd0"/><path d="M2 13.800c6 0 9.500-3 10.500-9" fill="none" stroke="#f3d56a" stroke-width="1.300"/><path d="M11.500 6V1.500M9.500 3l2-2.500 2 2.500z" fill="#fff3b8" stroke="#c79a1e" stroke-width=".9"/></svg>
<svg style="left:223.500px;top:527px" width="11" height="6"><use href="#menutri"/></svg>
<div class="minb" style="left:243px;top:527px"></div>
<div class="maxb" style="left:265px;top:527px"></div>
<!-- list -->
<div class="abs" style="left:6px;top:552px;width:280px;height:16px;background:#2165d6"></div>
<svg style="left:25px;top:552px" width="16" height="16"><use href="#arduino"/></svg>
<div class="ui" style="left:43.500px;top:552px;color:#fff;letter-spacing:.09px">Edison</div>
<svg style="left:25px;top:569px" width="16" height="16" viewBox="0 0 16 16"><rect x="1" y=".8" width="14.500" height="14.200" fill="#474747"/><rect x="1" y=".8" width="14.500" height="2.300" fill="#c4c4c4"/><path d="M2.500 5l1.500 1-1.500 1" stroke="#ddd" stroke-width=".7" fill="none"/><rect x="0" y="8.500" width="6.500" height="7" fill="#e0243a"/><path d="M1.500 10l3.500 4M5 10l-3.500 4" stroke="#fff" stroke-width="1.200"/></svg>
<div class="ui" style="left:43.500px;top:569px;letter-spacing:.09px">Edison</div>
<svg style="left:26px;top:586px" width="15" height="15"><use href="#monitor"/></svg>
<div class="ui" style="left:43.500px;top:586px;letter-spacing:.03px">Local</div>
<!-- CONSOLE -->
<div class="panel" style="left:293px;top:520px;width:984px;height:190px"></div>
<div class="abs" style="left:431px;top:520px;width:93px;height:31px;background:linear-gradient(#e4e5ed,#eeeff4 45%,#fff);box-shadow:inset 0 1px 0 #d2d4df;border-radius:8px 8px 0 0"></div>
<svg style="left:298px;top:528px" width="15" height="15" viewBox="0 0 15 15"><path d="M.5.500h12c1.500 2-1 4 0 7s0 5 0 7h-12z" fill="#f6f6fa" stroke="#b9bdd0" stroke-width=".9"/><path d="M9 .5v14M.5 7.500h12" stroke="#c9cde0" stroke-width=".8"/><circle cx="5" cy="4.200" r="2.600" fill="#ea6f7a"/><path d="M2.200 14l2.800-5 2.800 5z" fill="#f3b04e"/></svg>
<div class="tabtxt" style="left:318.500px;top:529px;color:#777;letter-spacing:.19px">Problems</div>
<svg style="left:376px;top:528px" width="15" height="15" viewBox="0 0 15 15"><rect x="3.500" y="2" width="10.500" height="12" fill="#f7f2e4" stroke="#d3c4a0"/><rect x="6" y=".5" width="5.500" height="3" rx=".8" fill="#c9ccd6"/><path d="M7.500 6.500h5M7.500 8.800h5M7.500 11h5" stroke="#b0b0b0" stroke-width=".8"/><path d="M.6 8.500l2.400 2.800 4.200-5.800" fill="none" stroke="#5b95e0" stroke-width="1.400"/></svg>
<div class="tabtxt" style="left:396.500px;top:529px;color:#777;letter-spacing:.17px">Tasks</div>
<svg style="left:436.500px;top:528px" width="14" height="14"><use href="#monitor"/></svg>
<div class="tabtxt" style="left:455.500px;top:529px;letter-spacing:.21px">Console</div>
<svg style="left:504.700px;top:530.700px" width="10.500" height="10.500"><use href="#xclose"/></svg>
<svg style="left:528px;top:529px" width="14" height="13" viewBox="0 0 14 13"><rect x=".5" y=".5" width="13" height="12" fill="#fafafa" stroke="#b5b5b5"/><rect x=".5" y=".5" width="13" height="2.500" fill="#dcdcdc" stroke="#b5b5b5"/><path d="M4.500 3v9.500M.5 6h13M.5 9h13" stroke="#cfcfcf" stroke-width=".8"/></svg>
<div class="tabtxt" style="left:547.500px;top:529px;color:#777;letter-spacing:.4px">Properties</div>
<!-- console toolbar -->
<div class="abs" style="left:961px;top:528px;width:11px;height:11px;background:#dedede;border:1px solid #d0d0d0;border-radius:1px"></div>
<svg style="left:982px;top:526px" width="14" height="14" viewBox="0 0 14 14"><path d="M2.700 2.700l8.600 8.600M11.300 2.700l-8.600 8.600" stroke="#525252" stroke-width="3.600" stroke-linecap="round"/></svg>
<svg style="left:1003px;top:525px" width="16" height="16" viewBox="0 0 16 16"><path d="M2 2l6.500 6.500M8.500 2L2 8.500" stroke="#8e8e8e" stroke-width="3" stroke-linecap="round"/><path d="M6.500 7.500l7 7M13.500 7.500l-7 7" stroke="#505050" stroke-width="3.200" stroke-linecap="round"/></svg>
<div class="vsep" style="left:1024px;top:522px;height:22px;background:#d6d6d6"></div>
<svg style="left:1031px;top:525px" width="16" height="16" viewBox="0 0 16 16"><path d="M.5.500h7l3 3v10h-10z" fill="#fffdf4" stroke="#b8a56c"/><path d="M2.500 4h5M2.500 6h6M2.500 8h6M2.500 10h4" stroke="#3f62b0" stroke-width="1.100"/><path d="M9 9.500l5.500 5.500M14.500 9.500L9 15" stroke="#6a6a6a" stroke-width="2.200" stroke-linecap="round"/></svg>
<svg style="left:1053px;top:525px" width="16" height="16" viewBox="0 0 16 16"><rect x="2.500" y=".8" width="12.500" height="13" fill="#dcebfa" stroke="#7f9fc8"/><rect x="10.500" y=".8" width="4.500" height="13" fill="#fff" stroke="#7f9fc8" stroke-width=".8"/><rect x="11.800" y="2.500" width="2" height="2" fill="#5a7fb8"/><rect x="11.800" y="10" width="2" height="2" fill="#5a7fb8"/><path d="M2.500 9V6.500c0-3 4.500-3 4.500 0V9" fill="none" stroke="#c99a2e" stroke-width="1.300"/><rect x=".5" y="8.500" width="8.500" height="6.500" rx="1" fill="#f1b836" stroke="#b8811c"/></svg>
<svg style="left:1075px;top:525px" width="16" height="15" viewBox="0 0 16 15"><path d="M.5.500h7l3 3v10h-10z" fill="#fffdf4" stroke="#b8a56c"/><path d="M2.500 4h5M2.500 6h6M2.500 8h4M2.500 10h4" stroke="#3f62b0" stroke-width="1.100"/><path d="M14 3.500v6h-5v-2.500l-3.500 3.800 3.500 3.700v-2.500h7.500v-8.500z" fill="#fdf0b4" stroke="#d3a640" stroke-width=".9"/></svg>
<div class="abs" style="left:1093px;top:522px;width:22px;height:22px;background:#dedede;border:1px solid #bcbcbc"></div>
<div class="abs" style="left:1115px;top:522px;width:22px;height:22px;background:#dedede;border:1px solid #bcbcbc"></div>
<svg style="left:1096px;top:525px" width="16" height="16" viewBox="0 0 16 16"><rect x="4.500" y=".8" width="11" height="8" fill="#fff" stroke="#2f6bc4" stroke-width="1.200"/><path d="M7 3.500h6M7 6h4" stroke="#2c3f9a" stroke-width="1"/><rect x=".8" y="6.500" width="7.500" height="6" fill="#eaf2fc" stroke="#2f6bc4" stroke-width="1.200"/><path d="M2.500 14.800h4.500M4.700 12.500v2" stroke="#2c3f9a" stroke-width="1.300"/></svg>
<svg style="left:1118px;top:525px" width="16" height="16" viewBox="0 0 16 16"><rect x="4.500" y=".8" width="11" height="8" fill="#fff" stroke="#2f6bc4" stroke-width="1.200"/><path d="M6.500 2.500l4 4.500M10.500 2.500l-4 4.500" stroke="#e0243a" stroke-width="1.800"/><path d="M12 3.500h2M12 6h2" stroke="#2c3f9a" stroke-width="1"/><rect x=".8" y="6.500" width="7.500" height="6" fill="#eaf2fc" stroke="#2f6bc4" stroke-width="1.200"/><path d="M2.500 14.800h4.500M4.700 12.500v2" stroke="#2c3f9a" stroke-width="1.300"/></svg>
<div class="vsep" style="left:1140px;top:522px;height:22px;background:#d6d6d6"></div>
<svg style="left:1148px;top:526px" width="15" height="15" viewBox="0 0 15 15"><rect x=".5" y="4.500" width="12" height="9" fill="#f4f8fd" stroke="#8a9cc0"/><rect x=".5" y="4.500" width="12" height="2.300" fill="#4a84d0"/><path d="M6.500 9.500l3-3.500" stroke="#333" stroke-width="1"/><path d="M8 4.500l4-4 2.500 2.500-4 4z" fill="#2fa84a" stroke="#1f7a35" stroke-width=".7"/></svg>
<svg style="left:1169.500px;top:525.500px" width="14" height="14"><use href="#monitor"/></svg>
<div class="tri g" style="left:1187px;top:532px;border-top-color:#8a8a8a"></div>
<svg style="left:1199px;top:525px" width="16" height="16" viewBox="0 0 16 16"><rect x=".5" y="3" width="13" height="11.500" fill="#eaf3fd" stroke="#a08a4c"/><rect x=".5" y="3" width="13" height="2.400" fill="#3f7fd0"/><path d="M2 13.800c6 0 9.500-3 10.500-8" fill="none" stroke="#efd58a" stroke-width="1.300"/><use href="#plus" x="8" y="-.5" width="8" height="8"/></svg>
<div class="tri" style="left:1217px;top:532px"></div>
<div class="minb" style="left:1231px;top:528px"></div>
<div class="maxb" style="left:1253px;top:528px"></div>
<!-- console content -->
<div class="abs" style="left:293px;top:551px;width:980px;height:17px;overflow:hidden"><div class="ui" style="left:5.500px;top:1px;font-size:11px;letter-spacing:.484px">&lt;terminated&gt; Blink (2) [Arduino] sh -c /bin/bash --verbose --noprofile "/Volumes/Users/masid/.arduinocdt/packages/Intel/tools/sketchUploader/1.6.2+1.0/clupload/cluploadEdison_osx.sh"</div></div>
<div class="abs" style="left:296px;top:567px;width:980px;height:1px;background:#6e6e6e"></div>
<div class="mono red" style="left:297.500px;top:568.500px">"$fixed_path/lsz" --escape -c "mv $target_download_name /sketch/sketch.elf; chmod +x /sketch/sketch.elf" &lt; $tty_port_id &gt; $tty_port_id</div>
<div class="mono" style="left:297.500px;top:583.500px">Moving downloaded file to /sketch/sketch.elf on target</div>
<div class="mono red" style="left:297.500px;top:598.500px">Retry 0: Got TIMEOUT</div>
<div class="mono red" style="left:297.500px;top:613.500px">Retry 0: Got TIMEOUT</div>
<div class="mono red" style="left:297.500px;top:643.500px">Transfer incomplete</div>
<div class="mono red" style="left:297.500px;top:658.500px">#</div>
<div class="mono red" style="left:297.500px;top:673.500px">#</div>

<!-- STATUS -->
<div id="status">
<svg style="left:3px;top:5px" width="16" height="16"><use href="#arduino"/></svg>
<div class="ui" style="left:25px;top:5.500px;letter-spacing:.36px">1 item selected</div>
<div class="dots" style="left:995px;top:7px;height:16px"></div>
</div>
<div class="abs" style="left:0;top:734px;width:4px;height:4px;background:radial-gradient(circle at 100% 0,transparent 3.200px,#222 4px)"></div>
<div class="abs" style="left:1276px;top:734px;width:4px;height:4px;background:radial-gradient(circle at 0 0,transparent 3.200px,#222 4px)"></div>
</body></html>
